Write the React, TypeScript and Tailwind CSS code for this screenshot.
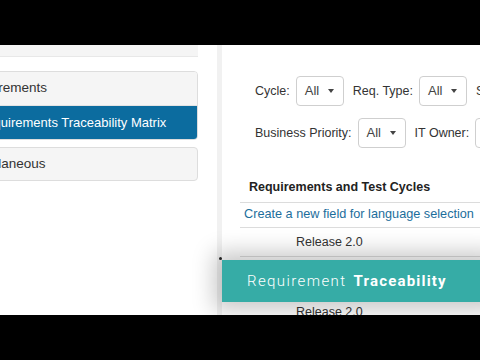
const filters1 = [
  { label: "Cycle:", value: "All" },
  { label: "Req. Type:", value: "All" },
  { label: "Status:", value: "All" },
];

const filters2 = [
  { label: "Business Priority:", value: "All" },
  { label: "IT Owner:", value: "All" },
];

const Select = ({ value }: { value: string }) => (
  <div className="flex items-center justify-between w-[48px] h-[30px] shrink-0 border border-[#cfcfcf] rounded-[4px] bg-white pl-[8px] pr-[9px] text-[13px] text-[#444]">
    <span>{value}</span>
    <span className="w-0 h-0 border-l-[3.5px] border-r-[3.5px] border-t-[4px] border-l-transparent border-r-transparent border-t-[#444]" />
  </div>
);

const FilterRow = ({ items }: { items: { label: string; value: string }[] }) => (
  <div className="flex items-center h-[30px] whitespace-nowrap">
    {items.map((f) => (
      <div key={f.label} className="flex items-center shrink-0 mr-[9px]">
        <span className="text-[12.5px] text-[#333] mr-[6px]">{f.label}</span>
        <Select value={f.value} />
      </div>
    ))}
  </div>
);

export default function App() {
  return (
    <div
      className="relative w-[480px] h-[360px] bg-black overflow-hidden flex flex-col"
      style={{ fontFamily: '"Liberation Sans", Arial, sans-serif' }}
    >
      <div className="h-[45px] shrink-0" />

      <div className="h-[270px] shrink-0 flex bg-white overflow-hidden">
        {/* left nav */}
        <div className="w-[217px] shrink-0 overflow-hidden">
          <div className="w-[198px] h-[12px] bg-[#f5f5f5] border-b border-[#e8e8e8]" />
          <div className="ml-[-50px] w-[248px] mt-[14px] border border-[#dddddd] rounded-r-[4px] overflow-hidden">
            <div className="h-[34px] flex items-center pl-[12px] bg-[#f5f5f5] text-[13.5px] text-[#333] border-b border-[#e3e3e3]">
              Requirements
            </div>
            <div className="h-[33px] flex items-center pl-[26px] bg-[#0c6c9f] text-[13px] text-white">
              Requirements Traceability Matrix
            </div>
          </div>
          <div className="ml-[-50px] w-[248px] mt-[7px] h-[34px] flex items-center pl-[9px] bg-[#f5f5f5] border border-[#dddddd] rounded-r-[4px] text-[13.5px] text-[#333]">
            Miscellaneous
          </div>
        </div>

        <div className="w-[5px] shrink-0 bg-[#f1f1f1]" />

        {/* main */}
        <div className="flex-1 min-w-0 overflow-hidden">
          <div className="pl-[33px] pt-[31px] flex flex-col gap-[12px]">
            <FilterRow items={filters1} />
            <FilterRow items={filters2} />
          </div>

          <div className="ml-[18px] mt-[24px] whitespace-nowrap">
            <div className="h-[31px] flex items-center pl-[9px] border-b border-[#dcdcdc] text-[12.5px] font-bold text-[#222]">
              Requirements and Test Cycles
            </div>
            <div className="h-[25px] flex items-center pl-[4px] border-b border-[#dcdcdc] text-[12.7px] text-[#1c6e9c]">
              Create a new field for language selection
            </div>
            <div className="h-[28px] flex items-center pl-[56px] text-[12.5px] text-[#333]">
              Release 2.0
            </div>
            <div className="h-[42px] border-t border-[#dcdcdc]" />
            <div className="h-[28px] flex items-center pl-[56px] text-[12.5px] text-[#333]">
              Release 2.0
            </div>
          </div>
        </div>
      </div>

      <div className="h-[45px] shrink-0 bg-black" />

      {/* title banner */}
      <div
        className="absolute left-[222px] top-[260px] w-[270px] h-[42px] bg-[#36aca6] shadow-[0_0_22px_8px_rgba(0,0,0,0.22)] flex items-center pl-[25px] text-white text-[15px] whitespace-nowrap"
        style={{ fontFamily: 'Roboto, "Open Sans", sans-serif' }}
      >
        <span className="font-light tracking-[1.4px]">Requirement</span>
        <span className="font-bold tracking-[1.2px] ml-[7px]">Traceability</span>
      </div>
      <div className="absolute left-[219px] top-[257px] w-[3px] h-[3px] rounded-full bg-[#222]" />
    </div>
  );
}
